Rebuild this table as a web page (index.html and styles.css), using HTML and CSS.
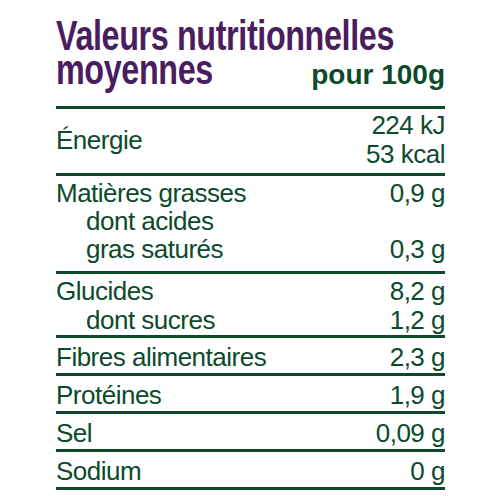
FILE: index.html
```html
<!DOCTYPE html>
<html lang="fr">
<head>
    <meta charset="UTF-8">
    <meta name="viewport" content="width=device-width, initial-scale=1.0">
    <title>Valeurs nutritionnelles moyennes</title>
    <link rel="stylesheet" href="styles.css">
</head>
<body>

    <div class="label">
        <!-- Title -->
        <header class="head">
            <div class="head-line">
                <h1 class="title">Valeurs nutritionnelles</h1>
            </div>
            <div class="head-line second">
                <span class="title">moyennes</span>
                <span class="per">pour 100g</span>
            </div>
        </header>

        <!-- Table rows -->
        <section class="row row-energy">
            <span class="name">Énergie</span>
            <span class="value">224 kJ<br>53 kcal</span>
        </section>

        <section class="row row-group">
            <div class="line">
                <span class="name">Matières grasses</span>
                <span class="value">0,9 g</span>
            </div>
            <div class="line sub">
                <span class="name">dont acides</span>
            </div>
            <div class="line sub">
                <span class="name">gras saturés</span>
                <span class="value">0,3 g</span>
            </div>
        </section>

        <section class="row row-group row-carbs">
            <div class="line">
                <span class="name">Glucides</span>
                <span class="value">8,2 g</span>
            </div>
            <div class="line sub">
                <span class="name">dont sucres</span>
                <span class="value">1,2 g</span>
            </div>
        </section>

        <section class="row">
            <span class="name">Fibres alimentaires</span>
            <span class="value">2,3 g</span>
        </section>

        <section class="row">
            <span class="name">Protéines</span>
            <span class="value">1,9 g</span>
        </section>

        <section class="row">
            <span class="name">Sel</span>
            <span class="value">0,09 g</span>
        </section>

        <section class="row">
            <span class="name">Sodium</span>
            <span class="value">0 g</span>
        </section>
    </div>

</body>
</html>
```

FILE: styles.css
```css
body {
    margin: 0;
    padding: 0;
    background-color: #ffffff;
    font-family: "Liberation Sans", Arial, sans-serif;
    color: #0c4a2c;
}
.label {
    width: 389px;
    margin: 0 0 0 56px;
}
.head {
    padding-top: 20px;
    padding-bottom: 20px;
    border-bottom: 3px solid #0c4a2c;
}
.head-line {
    display: flex;
    justify-content: space-between;
    align-items: baseline;
    height: 32px;
    line-height: 32px;
}
.head-line.second {
    margin-top: 2px;
}
.title {
    display: inline-block;
    margin: 0;
    font-size: 42px;
    font-weight: bold;
    letter-spacing: -0.5px;
    line-height: 32px;
    white-space: nowrap;
    color: #4a1e5e;
    transform: scaleX(0.77);
    transform-origin: left center;
}
.per {
    font-size: 28px;
    font-weight: bold;
    color: #0c4a2c;
}
.row {
    display: flex;
    justify-content: space-between;
    align-items: center;
    padding: 5px 0 1px;
    border-bottom: 3px solid #0c4a2c;
    font-size: 26px;
    letter-spacing: -0.5px;
    line-height: 29px;
}
.value {
    text-align: right;
}
.row-energy {
    padding: 2px 0 4px;
}
.row-group {
    display: block;
    padding: 3px 0 8px;
    line-height: 28px;
}
.row-carbs {
    padding: 3px 0 0;
    line-height: 29px;
}
.line {
    display: flex;
    justify-content: space-between;
}
.sub {
    padding-left: 30px;
}
```
